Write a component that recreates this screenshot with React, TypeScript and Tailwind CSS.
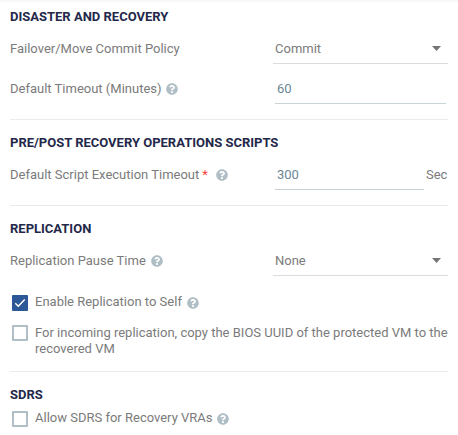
import { useState } from "react";
import type { ReactNode } from "react";
import { FaQuestionCircle } from "react-icons/fa";

function HelpIcon({ className = "" }: { className?: string }) {
  return <FaQuestionCircle className={`inline-block h-3 w-3 flex-shrink-0 text-[#b0bec5] ${className}`} />;
}

function Section({ title, children }: { title: string; children: ReactNode }) {
  return (
    <section className="border-b border-[#ebebeb] pt-[11px] last:border-b-0">
      <h2 className="h-6 text-[13px] leading-6 font-bold text-[#23284a]">{title}</h2>
      {children}
    </section>
  );
}

function Row({ label, children }: { label: ReactNode; children: ReactNode }) {
  return (
    <div className="flex h-10 items-center">
      <div className="flex w-[263px] flex-shrink-0 items-center">{label}</div>
      {children}
    </div>
  );
}

function Select({ value }: { value: string }) {
  return (
    <button className="flex h-[30px] w-[175px] items-center justify-between border-b border-[#dcdcdc] pr-[7.5px] pl-0.5">
      <span>{value}</span>
      <svg width="9" height="5" viewBox="0 0 9 5" className="fill-[#757575]">
        <path d="M0 0h9L4.5 5z" />
      </svg>
    </button>
  );
}

interface CheckboxProps {
  checked: boolean;
  onChange: (checked: boolean) => void;
  children: ReactNode;
}

function Checkbox({ checked, onChange, children }: CheckboxProps) {
  return (
    <label className="flex items-start gap-[7px] pl-0.5">
      <input
        type="checkbox"
        className="sr-only"
        checked={checked}
        onChange={(e) => onChange(e.target.checked)}
      />
      <span
        className={`flex h-4 w-4 flex-shrink-0 items-center justify-center rounded-[1px] ${
          checked ? "bg-[#2c5898]" : "border-2 border-[#b0bec5] bg-white"
        }`}
      >
        {checked && (
          <svg width="12" height="10" viewBox="0 0 12 10" fill="none" stroke="white" strokeWidth="1.5">
            <path d="M1.3 5.2 4.3 8.2 10.7 1.6" />
          </svg>
        )}
      </span>
      <span className="leading-4">{children}</span>
    </label>
  );
}

export default function App() {
  const [timeout, setTimeoutValue] = useState("60");
  const [scriptTimeout, setScriptTimeout] = useState("300");
  const [replicateToSelf, setReplicateToSelf] = useState(true);
  const [copyUuid, setCopyUuid] = useState(false);
  const [allowSdrs, setAllowSdrs] = useState(false);

  return (
    <div className="h-[435px] w-[458px] overflow-hidden bg-white font-['Roboto',sans-serif] text-[13px] text-[#7b7b7b]">
      <div className="h-[3px] bg-linear-to-b from-[#f5f5f5] to-white" />
      <div className="-mt-[9px] pr-2.5 pl-2.5">
        <Section title="DISASTER AND RECOVERY">
          <Row label="Failover/Move Commit Policy">
            <Select value="Commit" />
          </Row>
          <Row
            label={
              <>
                Default Timeout (Minutes)
                <HelpIcon className="ml-1" />
              </>
            }
          >
            <input
              className="ml-0.5 h-[30px] w-[171px] border-b border-[#c9d4d8] pl-0.5 text-[#6b8796] outline-none"
              value={timeout}
              onChange={(e) => setTimeoutValue(e.target.value)}
            />
          </Row>
          <div className="h-2.5" />
        </Section>

        <Section title="PRE/POST RECOVERY OPERATIONS SCRIPTS">
          <Row
            label={
              <>
                Default Script Execution Timeout
                <span className="ml-[3px] text-[#f44336]">*</span>
                <HelpIcon className="ml-2" />
              </>
            }
          >
            <input
              className="ml-0.5 h-[30px] w-[149px] border-b border-[#c9d4d8] pl-0.5 text-[#6b8796] outline-none"
              value={scriptTimeout}
              onChange={(e) => setScriptTimeout(e.target.value)}
            />
            <span className="ml-0.5">Sec</span>
          </Row>
          <div className="h-2.5" />
        </Section>

        <Section title="REPLICATION">
          <Row
            label={
              <>
                Replication Pause Time
                <HelpIcon className="ml-[5px]" />
              </>
            }
          >
            <Select value="None" />
          </Row>
          <div className="flex h-[90px] flex-col gap-3.5 pt-3.5">
            <Checkbox checked={replicateToSelf} onChange={setReplicateToSelf}>
              <span className="-mt-px flex items-center">
                Enable Replication to Self
                <HelpIcon className="mt-0.5 ml-[5px]" />
              </span>
            </Checkbox>
            <Checkbox checked={copyUuid} onChange={setCopyUuid}>
              For incoming replication, copy the BIOS UUID of the protected VM to the recovered VM
            </Checkbox>
          </div>
        </Section>

        <Section title="SDRS">
          <div className="pt-1">
            <Checkbox checked={allowSdrs} onChange={setAllowSdrs}>
              <span className="-mt-px flex items-center">
                Allow SDRS for Recovery VRAs
                <HelpIcon className="mt-0.5 ml-1" />
              </span>
            </Checkbox>
          </div>
        </Section>
      </div>
    </div>
  );
}
